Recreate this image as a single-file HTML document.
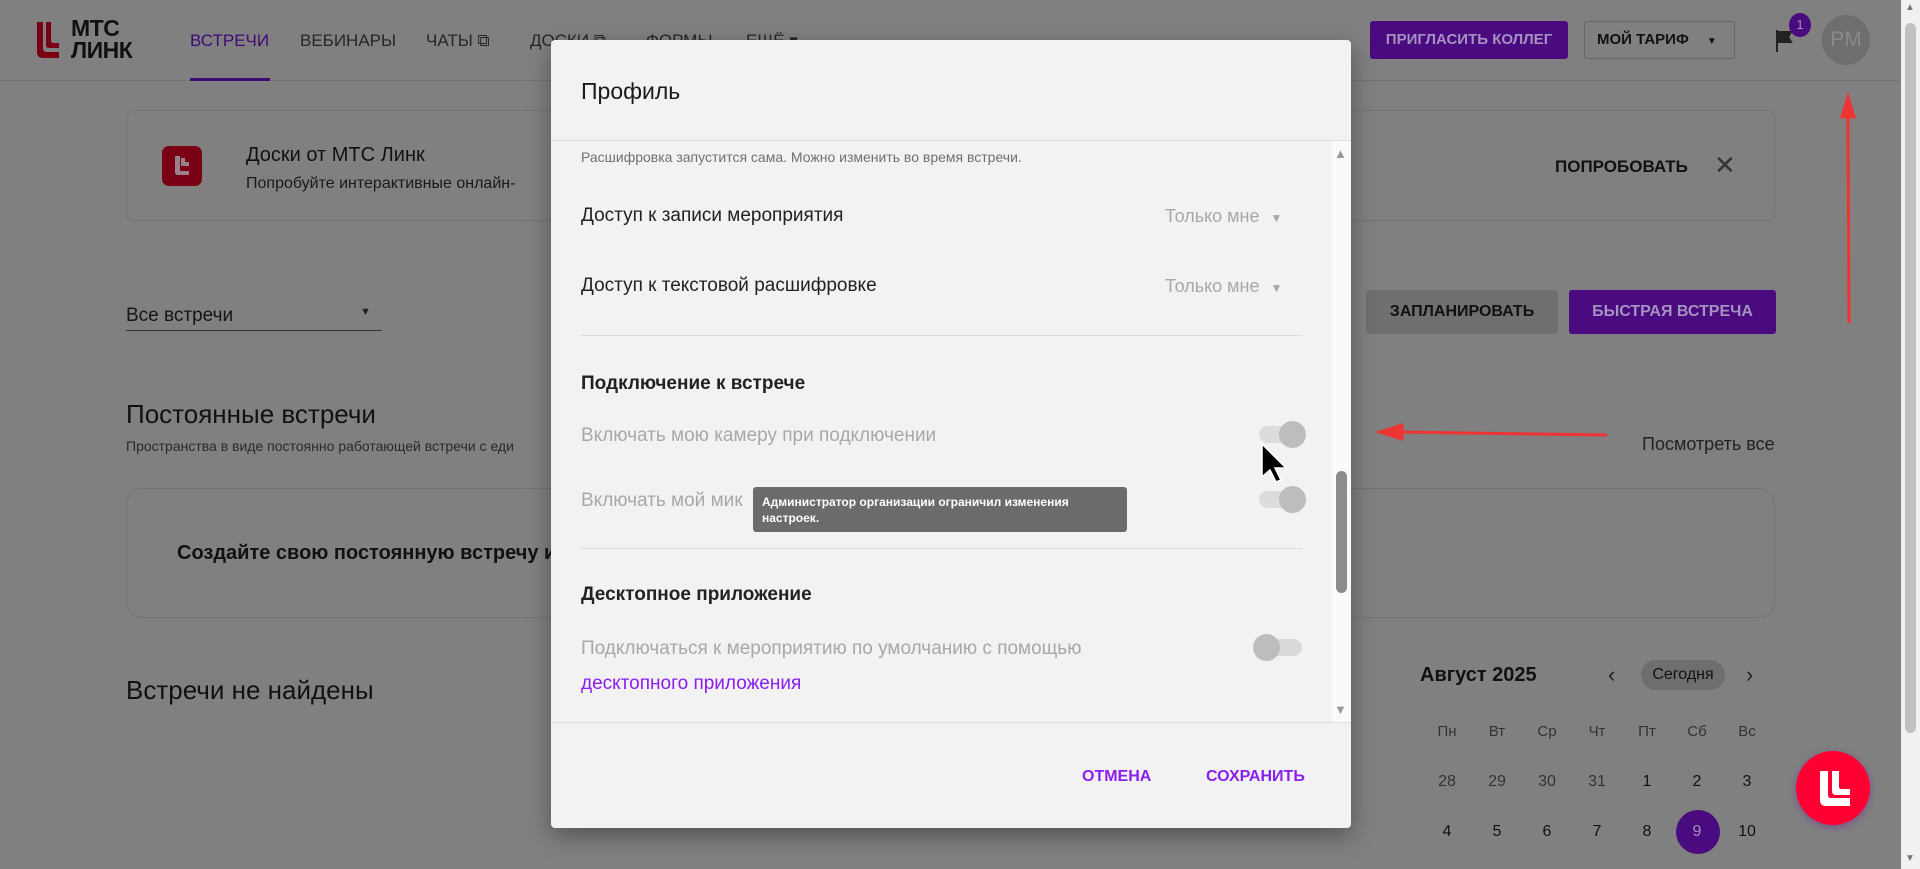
<!DOCTYPE html>
<html><head><meta charset="utf-8"><style>
*{box-sizing:border-box;margin:0;padding:0}
body{width:1920px;height:869px;overflow:hidden;background:#808080;font-family:"Liberation Sans",sans-serif;position:relative;color:#111}
.a{position:absolute;white-space:nowrap}
</style></head><body>
<!-- header -->
<div class="a" style="left:0;top:80px;width:1900px;height:1px;background:#747474"></div>
<svg class="a" style="left:37px;top:22px" width="22" height="36" viewBox="0 0 22 36"><path d="M0 0h6v26q0 4 4 4h12v6H6q-6 0-6-6z" fill="#7a0016"/><path d="M9 0h5v18q0 3 3 3h5v5H12q-3 0-3-3z" fill="#7a0016"/></svg>
<div class="a" style="left:71px;top:17px;font-size:23px;line-height:22px;font-weight:bold;color:#111;letter-spacing:-0.5px">МТС<br>ЛИНК</div>
<div class="a" style="left:190px;top:31px;font-size:17px;color:#3e0a75">ВСТРЕЧИ</div>
<div class="a" style="left:190px;top:78px;width:80px;height:3px;background:#3e0a75"></div>
<div class="a" style="left:300px;top:31px;font-size:17px;color:#262626">ВЕБИНАРЫ</div>
<div class="a" style="left:426px;top:31px;font-size:17px;color:#262626">ЧАТЫ ⧉</div>
<div class="a" style="left:530px;top:31px;font-size:17px;color:#262626">ДОСКИ ⧉</div>
<div class="a" style="left:646px;top:31px;font-size:17px;color:#262626">ФОРМЫ</div>
<div class="a" style="left:746px;top:31px;font-size:17px;color:#262626">ЕЩЁ ▾</div>
<div class="a" style="left:1370px;top:21px;width:198px;height:38px;background:#4a0a80;border-radius:3px;color:#a492c0;font-size:15px;font-weight:bold;text-align:center;line-height:38px">ПРИГЛАСИТЬ КОЛЛЕГ</div>
<div class="a" style="left:1584px;top:21px;width:151px;height:38px;border:1px solid #666;border-radius:3px;color:#111;font-size:15px;font-weight:bold;line-height:36px;padding-left:12px">МОЙ ТАРИФ <span style="font-size:10px;margin-left:14px">▼</span></div>
<svg class="a" style="left:1776px;top:30px" width="18" height="22"><path d="M1 0v22M1 2h14l-3 5 3 5H1" fill="#222" stroke="#222" stroke-width="2"/></svg>
<div class="a" style="left:1789px;top:13px;width:22px;height:24px;border-radius:50%;background:#4a0a80;color:#a492c0;font-size:13px;text-align:center;line-height:24px">1</div>
<div class="a" style="left:1822px;top:15px;width:48px;height:50px;border-radius:50%;background:#6e6e6e;color:#8a8a8a;font-size:21px;text-align:center;line-height:50px">PM</div>
<!-- banner -->
<div class="a" style="left:126px;top:110px;width:1649px;height:111px;border:1px solid #747474;border-radius:8px"></div>
<div class="a" style="left:162px;top:146px;width:40px;height:40px;background:#7a0016;border-radius:7px"></div>
<svg class="a" style="left:172px;top:154px" width="20" height="24" viewBox="0 0 20 24"><path d="M3 2v16q0 3 3 3h11v-4H8V2z M9 4v8h8V8h-4V4z" fill="#9a8088"/></svg>
<div class="a" style="left:246px;top:144px;font-size:20px;color:#111">Доски от МТС Линк</div>
<div class="a" style="left:246px;top:175px;font-size:16px;color:#1a1a1a">Попробуйте интерактивные онлайн-</div>
<div class="a" style="left:1555px;top:157px;font-size:17px;font-weight:bold;color:#111">ПОПРОБОВАТЬ</div>
<div class="a" style="left:1714px;top:150px;font-size:26px;color:#333">✕</div>
<!-- filter -->
<div class="a" style="left:126px;top:305px;font-size:19px;color:#151515">Все встречи</div>
<div class="a" style="left:360px;top:306px;font-size:11px;color:#222">▼</div>
<div class="a" style="left:126px;top:330px;width:256px;height:1px;background:#333"></div>
<div class="a" style="left:1366px;top:290px;width:192px;height:44px;background:#6f6f6f;border-radius:3px;font-size:16px;font-weight:bold;text-align:center;line-height:44px;color:#111">ЗАПЛАНИРОВАТЬ</div>
<div class="a" style="left:1569px;top:290px;width:207px;height:44px;background:#4a0a80;border-radius:3px;font-size:16px;font-weight:bold;text-align:center;line-height:44px;color:#a492c0">БЫСТРАЯ ВСТРЕЧА</div>
<div class="a" style="left:126px;top:399px;font-size:26px;color:#111">Постоянные встречи</div>
<div class="a" style="left:126px;top:438px;font-size:14px;color:#2a2a2a">Пространства в виде постоянно работающей встречи с еди</div>
<div class="a" style="left:1642px;top:434px;font-size:18px;color:#222">Посмотреть все</div>
<div class="a" style="left:126px;top:488px;width:1649px;height:130px;border:1px solid #747474;border-radius:16px"></div>
<div class="a" style="left:177px;top:542px;font-size:20px;font-weight:bold;color:#111">Создайте свою постоянную встречу ил</div>
<div class="a" style="left:126px;top:675px;font-size:26px;color:#111">Встречи не найдены</div>
<!-- calendar -->
<div class="a" style="left:1420px;top:664px;font-size:20px;font-weight:bold;color:#111">Август 2025</div>
<div class="a" style="left:1608px;top:662px;font-size:22px;color:#222">‹</div>
<div class="a" style="left:1641px;top:660px;width:84px;height:30px;border-radius:15px;background:#6e6e6e;font-size:16px;text-align:center;line-height:30px;color:#111">Сегодня</div>
<div class="a" style="left:1746px;top:662px;font-size:22px;color:#222">›</div>
<div class="a" style="left:1422px;top:723px;width:350px;display:flex;font-size:15px;color:#333">
<span style="width:50px;text-align:center">Пн</span><span style="width:50px;text-align:center">Вт</span><span style="width:50px;text-align:center">Ср</span><span style="width:50px;text-align:center">Чт</span><span style="width:50px;text-align:center">Пт</span><span style="width:50px;text-align:center">Сб</span><span style="width:50px;text-align:center">Вс</span></div>
<div class="a" style="left:1422px;top:773px;width:350px;display:flex;font-size:16px;color:#333">
<span style="width:50px;text-align:center">28</span><span style="width:50px;text-align:center">29</span><span style="width:50px;text-align:center">30</span><span style="width:50px;text-align:center">31</span><span style="width:50px;text-align:center;color:#111">1</span><span style="width:50px;text-align:center;color:#111">2</span><span style="width:50px;text-align:center;color:#111">3</span></div>
<div class="a" style="left:1676px;top:810px;width:44px;height:44px;border-radius:50%;background:#4a0a80"></div>
<div class="a" style="left:1422px;top:823px;width:350px;display:flex;font-size:16px;color:#111">
<span style="width:50px;text-align:center">4</span><span style="width:50px;text-align:center">5</span><span style="width:50px;text-align:center">6</span><span style="width:50px;text-align:center">7</span><span style="width:50px;text-align:center">8</span><span style="width:50px;text-align:center;color:#a492c0">9</span><span style="width:50px;text-align:center">10</span></div>
<!-- FAB -->
<div class="a" style="left:1796px;top:751px;width:74px;height:74px;border-radius:50%;background:#ff0032;box-shadow:0 2px 8px rgba(120,0,160,.4)"></div>
<svg class="a" style="left:1817px;top:768px" width="36" height="40" viewBox="0 0 36 40"><path d="M3 3h8v24q0 3 3 3h19v8H9q-6 0-6-6z" fill="#fff"/><path d="M15 3h7v16q0 2 2 2h9v6H19q-4 0-4-4z" fill="#fff"/></svg>
<!-- page scrollbar -->
<div class="a" style="left:1901px;top:0;width:19px;height:869px;background:#f1f1f1"></div>
<div class="a" style="left:1905px;top:23px;width:11px;height:710px;border-radius:6px;background:#c1c1c1"></div>
<div class="a" style="left:1905px;top:2px;font-size:10px;color:#777">▲</div>
<div class="a" style="left:1905px;top:853px;font-size:10px;color:#777">▼</div>
<!-- red arrows -->
<svg class="a" style="left:0;top:0" width="1920" height="869"><g stroke="#ee3333" stroke-width="3" fill="#ee3333"><line x1="1849" y1="323" x2="1848" y2="110"/><path d="M1848 97l-6 20h12z"/><line x1="1607" y1="435" x2="1395" y2="432"/><path d="M1380 432l22-7v14z"/></g></svg>
<!-- modal -->
<div class="a" style="left:551px;top:40px;width:800px;height:788px;background:#f2f2f2;border-radius:4px;box-shadow:0 8px 24px rgba(0,0,0,.35);overflow:hidden">
 <div class="a" style="left:30px;top:38px;font-size:23px;color:#1a1a1a">Профиль</div>
 <div class="a" style="left:0;top:100px;width:800px;height:1px;background:#ddd"></div>
 <div class="a" style="left:781px;top:101px;width:19px;height:581px;background:#fafafa"></div>
 <div class="a" style="left:785px;top:431px;width:11px;height:122px;border-radius:6px;background:#8c8c8c"></div>
 <div class="a" style="left:783px;top:106px;font-size:13px;color:#999">▲</div>
 <div class="a" style="left:783px;top:662px;font-size:13px;color:#999">▼</div>
 <div class="a" style="left:30px;top:109px;font-size:14px;color:#707070">Расшифровка запустится сама. Можно изменить во время встречи.</div>
 <div class="a" style="left:30px;top:165px;font-size:19px;color:#222">Доступ к записи мероприятия</div>
 <div class="a" style="left:614px;top:166px;font-size:18px;color:#a8a8a8">Только мне <span style="font-size:12px;margin-left:6px">▼</span></div>
 <div class="a" style="left:30px;top:235px;font-size:19px;color:#222">Доступ к текстовой расшифровке</div>
 <div class="a" style="left:614px;top:236px;font-size:18px;color:#a8a8a8">Только мне <span style="font-size:12px;margin-left:6px">▼</span></div>
 <div class="a" style="left:30px;top:295px;width:721px;height:1px;background:#ddd"></div>
 <div class="a" style="left:30px;top:333px;font-size:19px;font-weight:bold;color:#222">Подключение к встрече</div>
 <div class="a" style="left:30px;top:385px;font-size:19px;color:#a8a8a8">Включать мою камеру при подключении</div>
 <div class="a" style="left:708px;top:386px;width:40px;height:17px;border-radius:9px;background:#dcdcdc"></div>
 <div class="a" style="left:728px;top:381px;width:27px;height:27px;border-radius:50%;background:#bdbdbd"></div>
 <div class="a" style="left:30px;top:450px;font-size:19px;color:#a8a8a8">Включать мой мик</div>
 <div class="a" style="left:708px;top:451px;width:40px;height:17px;border-radius:9px;background:#dcdcdc"></div>
 <div class="a" style="left:728px;top:446px;width:27px;height:27px;border-radius:50%;background:#bdbdbd"></div>
 <div class="a" style="left:202px;top:447px;width:374px;height:45px;border-radius:3px;background:#6b6b6b;color:#fff;font-size:12px;font-weight:bold;line-height:16px;padding:7px 9px">Администратор организации ограничил изменения<br>настроек.</div>
 <div class="a" style="left:30px;top:508px;width:721px;height:1px;background:#ddd"></div>
 <div class="a" style="left:30px;top:544px;font-size:19px;font-weight:bold;color:#222">Десктопное приложение</div>
 <div class="a" style="left:30px;top:598px;font-size:19px;color:#a8a8a8">Подключаться к мероприятию по умолчанию с помощью</div>
 <div class="a" style="left:30px;top:633px;font-size:19px;color:#8a1ef0">десктопного приложения</div>
 <div class="a" style="left:707px;top:599px;width:44px;height:17px;border-radius:9px;background:#d9d9d9"></div>
 <div class="a" style="left:702px;top:594px;width:27px;height:27px;border-radius:50%;background:#bdbdbd"></div>
 <div class="a" style="left:0;top:682px;width:800px;height:1px;background:#ddd"></div>
 <div class="a" style="left:531px;top:728px;font-size:16px;font-weight:bold;color:#8a1ef0">ОТМЕНА</div>
 <div class="a" style="left:655px;top:728px;font-size:16px;font-weight:bold;color:#8a1ef0">СОХРАНИТЬ</div>
</div>
<!-- cursor -->
<svg class="a" style="left:1261px;top:443px" width="30" height="40" viewBox="0 0 30 40"><path d="M1 1v33l8-7 6 12 5-2-6-12h11z" fill="#000" stroke="#fff" stroke-width="1.5"/></svg>
</body></html>
